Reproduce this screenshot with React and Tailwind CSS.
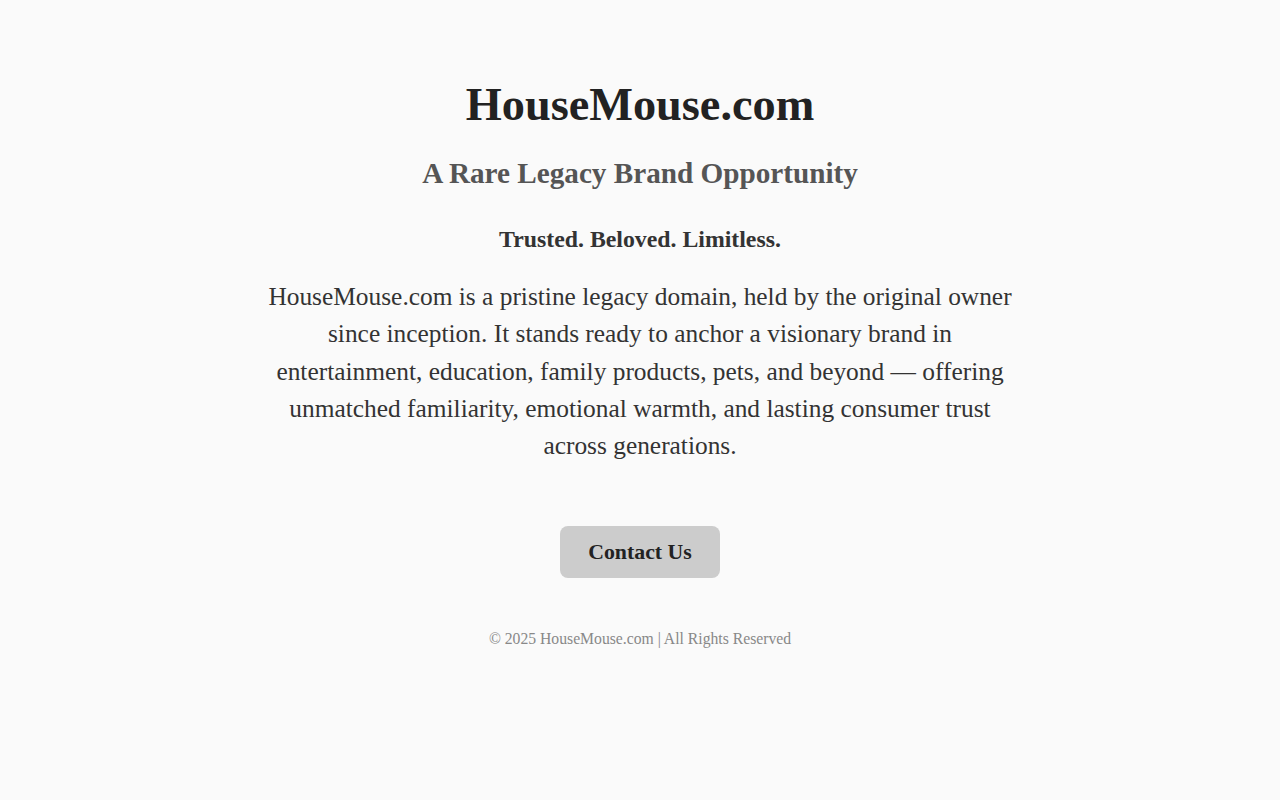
import React from 'react';

const serif = { fontFamily: '"Liberation Serif", "DejaVu Serif", serif' };

const App = () => {
  return (
    <div className="min-h-screen bg-[#fafafa] text-[#333]" style={serif}>
      <main className="mx-auto max-w-[800px] px-5 pt-[76px] text-center flex flex-col items-center">
        <h1 className="text-[46.3px] leading-[58px] font-bold text-[#222]">HouseMouse.com</h1>
        <h2 className="mt-[19px] text-[29.2px] leading-[40px] font-bold text-[#555]">
          A Rare Legacy Brand Opportunity
        </h2>
        <p className="mt-[31px] text-[23.8px] leading-[30px] font-bold text-[#333]">
          Trusted. Beloved. Limitless.
        </p>
        <p className="mt-[24px] text-[25.4px] leading-[37.3px] text-[#333]">
          HouseMouse.com is a pristine legacy domain, held by the original owner since inception. It
          stands ready to anchor a visionary brand in entertainment, education, family products, pets,
          and beyond — offering unmatched familiarity, emotional warmth, and lasting consumer trust
          across generations.
        </p>
        <button className="mt-[62px] w-[160px] h-[52px] rounded-lg bg-[#ccc] text-[21.8px] font-bold text-[#222]">
          Contact Us
        </button>
        <footer className="mt-[49px] text-[15.7px] text-[#888]">
          © 2025 HouseMouse.com | All Rights Reserved
        </footer>
      </main>
    </div>
  );
};

export default App;
